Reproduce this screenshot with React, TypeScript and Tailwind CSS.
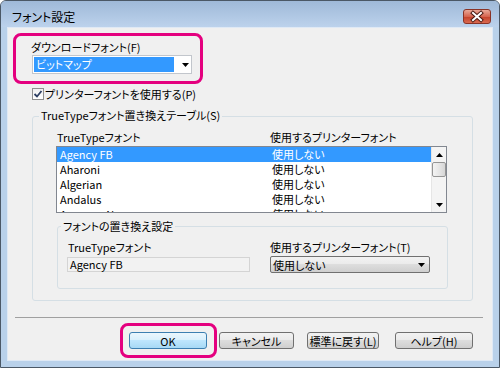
import React from 'react';

const rows = [
    ['Agency FB', '使用しない'],
    ['Aharoni', '使用しない'],
    ['Algerian', '使用しない'],
    ['Andalus', '使用しない'],
    ['Angsana New', '使用しない'],
];

const Tri = ({ up = false }: { up?: boolean }) => (
    <svg width="7" height="4" viewBox="0 0 7 4">
        <path d={up ? 'M0 4L3.5 0L7 4Z' : 'M0 0L7 0L3.5 4Z'} fill="#000" />
    </svg>
);

const Btn = ({ label, w, primary = false, className = '' }: { label: string; w: string; primary?: boolean; className?: string }) => (
    <div
        className={`${w} h-[17px] rounded-[3px] border flex items-center justify-center leading-[14px] ${
            primary
                ? 'border-[#3c7fb1] bg-[linear-gradient(to_bottom,#eaf6fd,#d9f0fc_45%,#bee6fd_50%,#a7d9f5)]'
                : 'border-[#707070] bg-[linear-gradient(to_bottom,#f2f2f2,#ebebeb_45%,#dddddd_50%,#cfcfcf)]'
        } ${className}`}
    >
        {label}
    </div>
);

export default function App() {
    return (
        <div className="w-[500px] h-[368px] bg-white font-['Noto_Sans_CJK_JP',sans-serif] [font-feature-settings:'palt'] text-[11px] leading-[14px] text-black">
            <div className="w-[500px] h-[368px] flex flex-col rounded-t-[6px] border border-[#4b5866] bg-[#b9d1ea] overflow-hidden">
                {/* title bar */}
                <div className="h-[26px] flex items-start bg-[linear-gradient(to_bottom,#9fb9d8,#bcd2ec)]">
                    <span className="ml-[11px] mt-[9px] text-[12px] leading-[14px]">フォント設定</span>
                    <div className="ml-auto mr-[8px] mt-[8px] w-[28px] h-[15px] rounded-[3px] border border-[#8a3326] bg-[linear-gradient(to_bottom,#e9a898,#d6654f_50%,#c4412a_52%,#d96a50)]">
                        <svg width="26" height="13" viewBox="0 0 26 13">
                            <path d="M9 3L17 10M17 3L9 10" stroke="#4a1a12" strokeWidth="4" strokeLinecap="square" />
                            <path d="M9 3L17 10M17 3L9 10" stroke="#fff" strokeWidth="2" strokeLinecap="square" />
                        </svg>
                    </div>
                </div>

                {/* client area */}
                <div className="mx-[6px] mb-[6px] flex-1 border border-[#dfe9f5] bg-[#f0f0f0] flex flex-col">
                    {/* download font */}
                    <div className="ml-[5px] mt-[5px] w-[190px] h-[51px] border-[3px] border-[#e4007f] rounded-[8px] flex flex-col">
                        <span className="ml-[15px] mt-[5px] leading-[12px]">ダウンロードフォント(F)</span>
                        <div className="ml-[16px] mt-[2px] w-[160px] h-[19px] border border-[#c2c6cc] bg-white flex items-center">
                            <div className="ml-[1px] w-[140px] h-[15px] bg-[#3399ff] text-white pl-[2px] leading-[15px]">ビットマップ</div>
                            <div className="ml-[8px]">
                                <Tri />
                            </div>
                        </div>
                    </div>

                    {/* checkbox */}
                    <div className="ml-[24px] mt-[3px] h-[13px] flex items-center">
                        <div className="w-[12px] h-[12px] border border-[#8e8f8f] bg-[linear-gradient(to_bottom,#f0f0f0,#ffffff)] flex items-center justify-center">
                            <svg width="10" height="10" viewBox="0 0 10 10">
                                <path d="M1.5 5L4 7.5L8.5 2" stroke="#2d3f63" strokeWidth="1.8" fill="none" />
                            </svg>
                        </div>
                        <span className="ml-[1px]">プリンターフォントを使用する(P)</span>
                    </div>

                    {/* replacement table group */}
                    <div className="ml-[24px] mt-[16px] w-[441px] h-[185px] border border-[#d5dfe5] rounded-[3px] flex flex-col">
                        <span className="-mt-[9px] ml-[6px] px-[2px] self-start bg-[#f0f0f0]">TrueTypeフォント置き換えテーブル(S)</span>
                        <div className="mt-[8px] flex">
                            <span className="w-[237px] pl-[24px]">TrueTypeフォント</span>
                            <span>使用するプリンターフォント</span>
                        </div>
                        <div className="ml-[23px] mt-[2px] w-[391px] h-[67px] border border-[#828790] bg-white flex overflow-hidden">
                            <div className="flex-1 flex flex-col">
                                {rows.map(([a, b], i) => (
                                    <div key={i} className={`h-[15px] shrink-0 flex leading-[15px] ${i === 0 ? 'bg-[#3399ff] text-white' : ''}`}>
                                        <span className="w-[213px] pl-[3px]">{a}</span>
                                        <span className="pl-[2px]">{b}</span>
                                    </div>
                                ))}
                            </div>
                            <div className="w-[15px] border-l border-[#e6e6e6] bg-[#f4f4f4] flex flex-col items-center">
                                <div className="h-[15px] flex items-center justify-center">
                                    <Tri up />
                                </div>
                                <div className="w-[14px] h-[15px] rounded-[2px] border border-[#959595] bg-[linear-gradient(to_right,#f3f3f3,#e6e6e6_50%,#d6d6d6)]" />
                                <div className="mt-auto h-[15px] flex items-center justify-center">
                                    <Tri />
                                </div>
                            </div>
                        </div>

                        {/* replacement settings group */}
                        <div className="ml-[24px] mt-[13px] w-[391px] h-[63px] border border-[#d5dfe5] rounded-[3px] flex flex-col">
                            <span className="-mt-[8px] ml-[3px] px-[2px] self-start bg-[#f0f0f0]">フォントの置き換え設定</span>
                            <div className="mt-[7px] flex">
                                <div className="ml-[9px] w-[183px] flex flex-col">
                                    <span className="pl-[1px]">TrueTypeフォント</span>
                                    <div className="mt-[3px] h-[15px] border border-[#d4d4d4] bg-[#f2f2f2] pl-[2px] leading-[13px]">Agency FB</div>
                                </div>
                                <div className="ml-[20px] w-[160px] flex flex-col">
                                    <span>使用するプリンターフォント(T)</span>
                                    <div className="mt-[2px] h-[17px] rounded-[2px] border border-[#707070] bg-[linear-gradient(to_bottom,#f2f2f2,#ebebeb_45%,#dddddd_50%,#cfcfcf)] flex items-center pl-[2px]">
                                        <span>使用しない</span>
                                        <div className="ml-auto mr-[4px]">
                                            <Tri />
                                        </div>
                                    </div>
                                </div>
                            </div>
                        </div>
                    </div>

                    {/* separator */}
                    <div className="ml-[7px] mt-[16px] w-[468px] h-px bg-[#a0a0a0]" />

                    {/* buttons */}
                    <div className="mt-[5px] flex items-center">
                        <div className="ml-[112px] w-[97px] h-[35px] border-[3px] border-[#e4007f] rounded-[8px] flex items-center pl-[6px]">
                            <Btn label="OK" w="w-[78px]" primary />
                        </div>
                        <Btn label="キャンセル" w="w-[75px]" className="ml-[2px]" />
                        <Btn label="標準に戻す(L)" w="w-[72px]" className="ml-[13px]" />
                        <Btn label="ヘルプ(H)" w="w-[78px]" className="ml-[16px]" />
                    </div>
                </div>
            </div>
        </div>
    );
}
